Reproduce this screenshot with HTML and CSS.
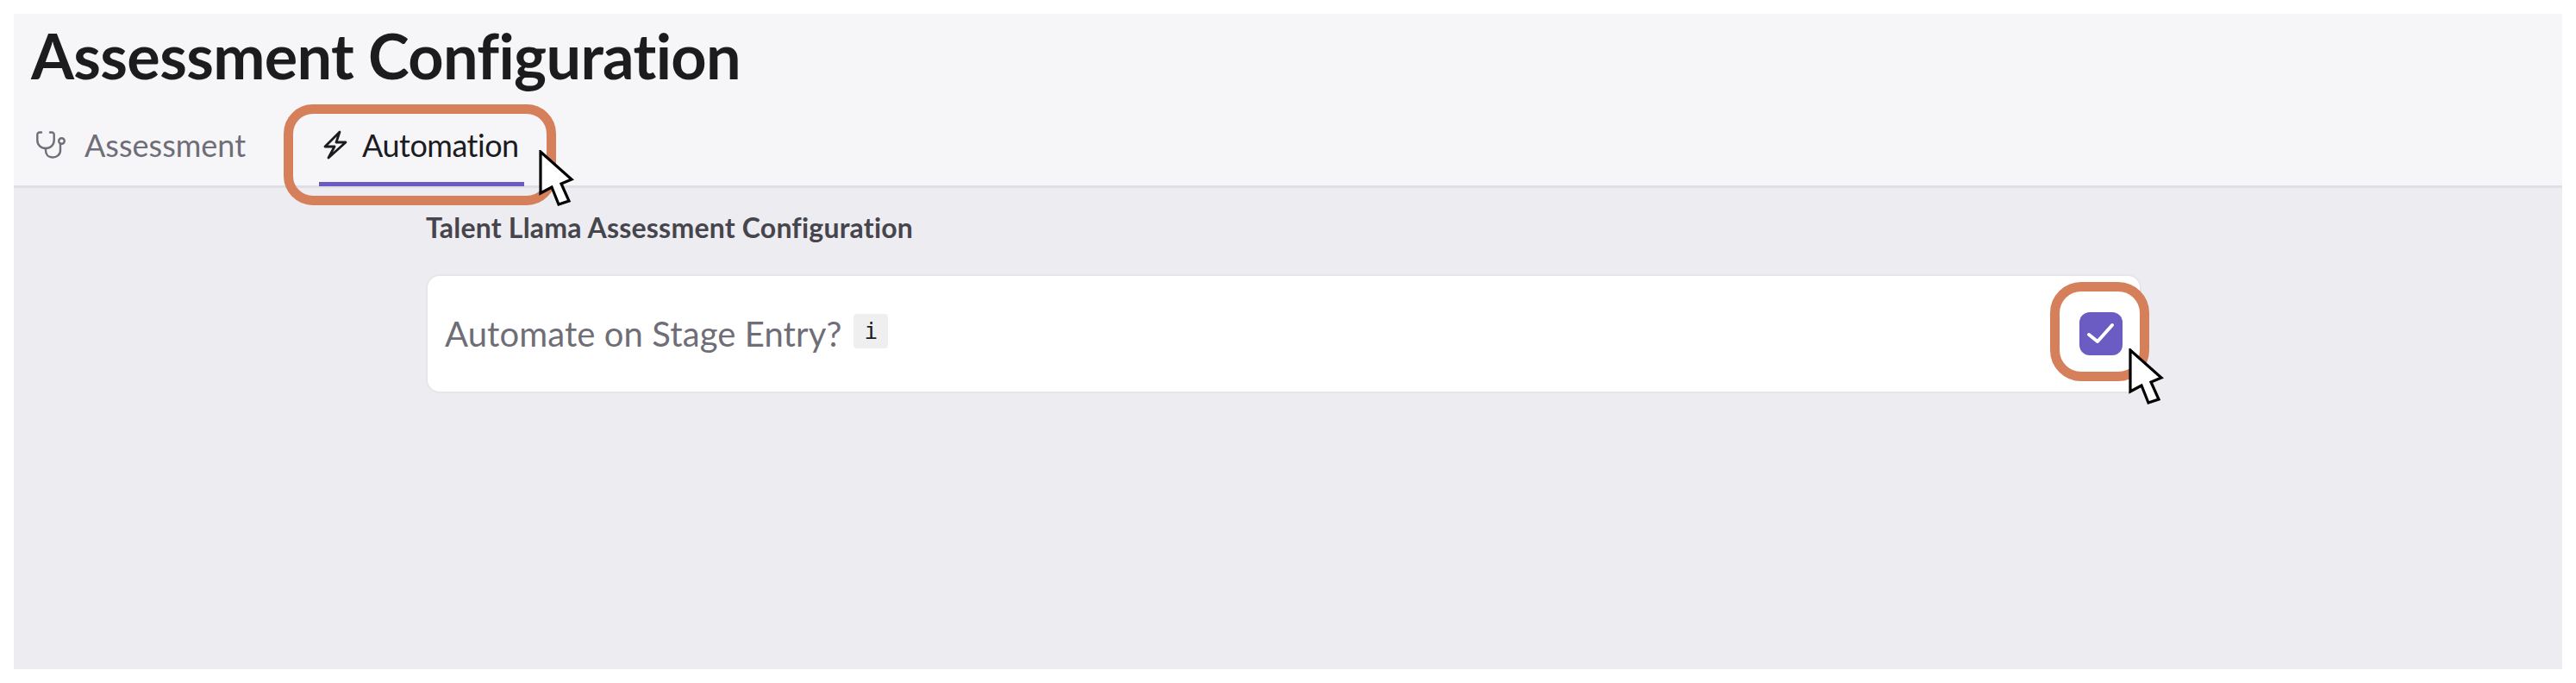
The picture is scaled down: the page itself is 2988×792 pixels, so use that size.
FILE: index.html
```html
<!DOCTYPE html>
<html lang="en">
<head>
<meta charset="utf-8">
<title>Assessment Configuration</title>
<link rel="stylesheet" href="styles.css">
</head>
<body>
<div class="frame">
  <header class="header">
    <h1 class="title">Assessment Configuration</h1>
    <nav class="tabs">
      <div class="tab">
        <svg class="tab-icon icon-steth" viewBox="0 0 35 32" fill="none" stroke="currentColor" stroke-width="2.400" stroke-linecap="round" stroke-linejoin="round"><path d="M6 1.500H4C2.300 1.500 1.300 2.700 1.300 4.300V10.500C1.300 16 5.500 20 11 20s9.700-4 9.700-9.500V4.300C20.700 2.700 19.700 1.500 18 1.500H16"/><path d="M11 20v2.500C11 27.500 14.500 30.500 19 30.500s9-3 9-8V15"/><circle cx="29.500" cy="11.500" r="3.300"/></svg>
        <span>Assessment</span>
      </div>
      <div class="tab tab-active">
        <svg class="tab-icon icon-bolt" viewBox="0 0 28 34" fill="none" stroke="currentColor" stroke-width="2.800" stroke-linecap="round" stroke-linejoin="round"><path d="M19 2 2 19H13L6 32 26 14H15z"/></svg>
        <span>Automation</span>
      </div>
    </nav>
  </header>
  <main class="main">
    <h2 class="section-title">Talent Llama Assessment Configuration</h2>
    <div class="card">
      <div class="label-group">
        <span class="label">Automate on Stage Entry?</span>
        <code class="badge">i</code>
      </div>
      <div class="checkbox">
        <svg class="check" viewBox="0 0 50 50" fill="none" stroke="#fff" stroke-width="4" stroke-linecap="round" stroke-linejoin="round"><path d="M11 26l10 8L38 15"/></svg>
      </div>
    </div>
  </main>
  <div class="callout callout-tab"></div>
  <div class="callout callout-check"></div>
  <svg class="cursor cursor-tab" viewBox="0 0 42 66"><path d="M2 2v48l13-7 8 20 12-4-9-20 12-5z" fill="#fff" stroke="#000" stroke-width="3.200"/></svg>
  <svg class="cursor cursor-check" viewBox="0 0 42 66"><path d="M2 2v48l13-7 8 20 12-4-9-20 12-5z" fill="#fff" stroke="#000" stroke-width="3.200"/></svg>
</div>
</body>
</html>
```

FILE: styles.css
```css
* { box-sizing: border-box; }
html, body { margin: 0; padding: 0; background: #fff; }
body { width: 2988px; height: 792px; overflow: hidden; font-family: Lato, "Noto Sans", sans-serif; font-variant-ligatures: none; }
.frame { position: relative; margin: 16px; height: 760px; background: #edecf1; display: flex; flex-direction: column; }
.header { height: 202px; background: #f6f6f9; border-bottom: 3px solid #e0dfe6; padding: 0 0 0 20px; display: flex; flex-direction: column; flex: none; }
.title { margin: 0; padding-top: 8px; height: 108px; font-size: 72px; line-height: 80px; font-weight: 700; letter-spacing: -0.65px; color: #1c1c1f; }
.tabs { display: flex; gap: 85px; height: 91px; padding-left: 6px; }
.tab { display: flex; align-items: center; height: 91px; padding: 0 0 4px; font-size: 36px; color: #6f6e78; position: relative; }
.icon-steth { width: 35px; height: 32px; flex: none; margin-right: 21px; }
.icon-bolt { width: 28px; height: 34px; flex: none; margin-right: 17px; }
.tab-active { color: #1c1c1f; padding: 0 6px 4px 5px; letter-spacing: -0.5px; }
.tab-active::after { content: ""; position: absolute; left: 0; right: 0; bottom: -1px; height: 5px; background: #6a5cc2; }
.main { padding: 27px 0 0; margin-left: 478px; width: 1990px; }
.section-title { margin: 0; font-size: 32px; line-height: 38px; font-weight: 700; letter-spacing: 0.2px; color: #46454d; }
.card { margin-top: 35px; height: 138px; background: #fff; border: 2px solid #e6e5ea; border-radius: 16px; display: flex; align-items: center; justify-content: space-between; padding: 0 20px 0 20px; }
.label-group { display: flex; align-items: center; gap: 14px; }
.label { font-size: 40px; line-height: 48px; letter-spacing: 0.1px; color: #6f6e78; }
.badge { display: flex; align-items: center; justify-content: center; width: 40px; height: 40px; margin-top: -6px; background: #efefef; border-radius: 4px; font-family: "DejaVu Sans Mono", "Liberation Mono", monospace; font-size: 26px; color: #1c1c1f; }
.checkbox { width: 50px; height: 50px; background: #6a5cc2; border-radius: 12px; flex: none; }
.check { display: block; width: 50px; height: 50px; }
.callout { position: absolute; border: 11px solid #d5805a; }
.callout-tab { left: 313px; top: 105px; width: 316px; height: 117px; border-radius: 34px; }
.callout-check { left: 2362px; top: 311px; width: 115px; height: 115px; border-radius: 36px; }
.cursor { position: absolute; width: 42px; height: 66px; }
.cursor-tab { left: 609px; top: 158px; }
.cursor-check { left: 2453px; top: 388px; }
```
